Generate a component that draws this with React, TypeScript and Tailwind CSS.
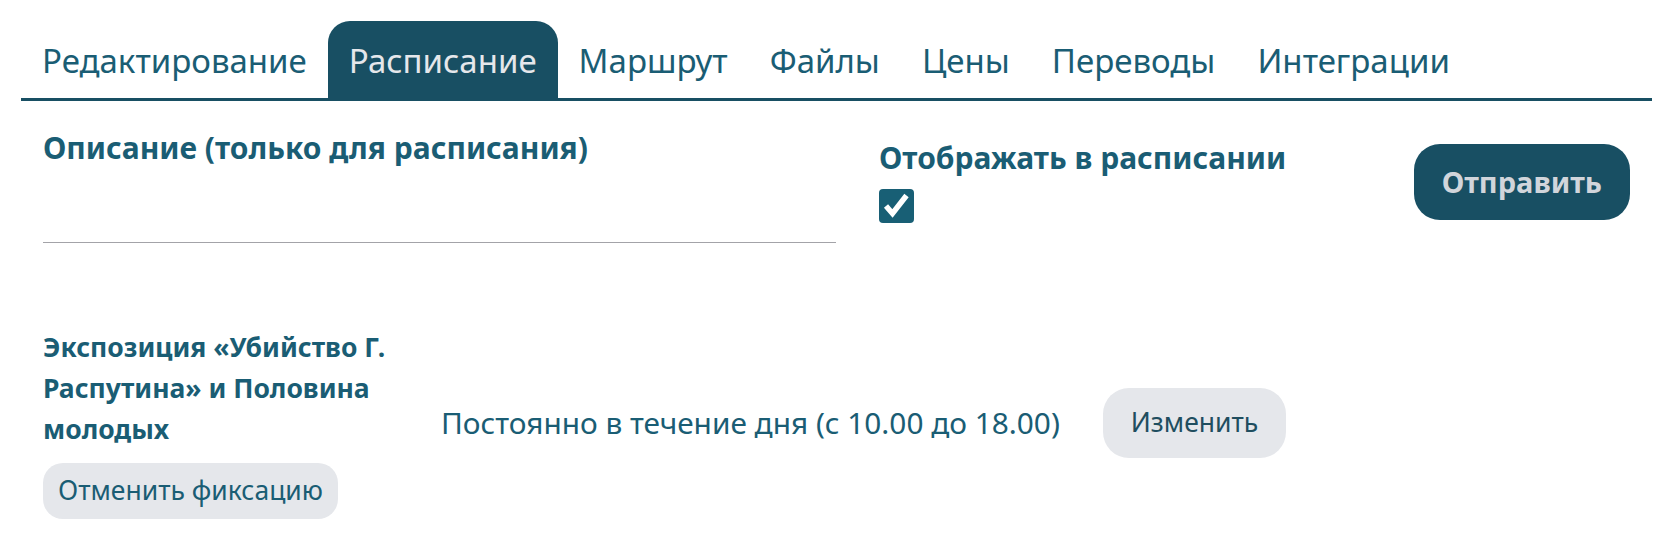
import { useState } from "react";

const tabs = ["Редактирование", "Расписание", "Маршрут", "Файлы", "Цены", "Переводы", "Интеграции"];

export default function App() {
  const [active, setActive] = useState("Расписание");
  const [visible, setVisible] = useState(true);

  return (
    <div className="min-h-screen bg-white px-[21px] pt-[21px] text-[#1a5d74] font-['Segoe_UI','Noto_Sans',sans-serif]">
      {/* Tabs */}
      <div className="flex border-b-[3px] border-[#184f63]">
        {tabs.map((t) => (
          <button
            key={t}
            onClick={() => setActive(t)}
            className={
              t === active
                ? "h-[77px] px-[21px] pt-[2px] rounded-t-[22px] bg-[#184f63] text-[#e5e7eb] text-[33px] leading-none"
                : "h-[77px] px-[21px] pt-[2px] rounded-t-[22px] text-[#1a5d74] text-[33px] leading-none"
            }
          >
            {t}
          </button>
        ))}
      </div>

      <div className="px-[22px]">
        {/* Description + show in schedule + submit */}
        <div className="flex items-start gap-[43px] mt-[27px]">
          <div className="w-[793px]">
            <h3 className="text-[30px] font-bold leading-[39px]">Описание (только для расписания)</h3>
            <input
              type="text"
              className="w-full h-[76px] border-b border-[#a3a3a8] outline-none bg-transparent text-[24px]"
            />
          </div>

          <div className="flex flex-col gap-[12px] mt-[10px]">
            <h3 className="text-[30px] font-bold leading-[39px]">Отображать в расписании</h3>
            <button
              onClick={() => setVisible(!visible)}
              className="w-[35px] h-[34px] rounded-[4px] bg-[#185f75] flex items-center justify-center"
            >
              {visible && (
                <svg width="35" height="34" viewBox="0 0 35 34" fill="none">
                  <path d="M7 17l6.5 7.5L27.5 6.5" stroke="white" strokeWidth="5.5" />
                </svg>
              )}
            </button>
          </div>

          <button className="ml-auto mt-[16px] h-[76px] px-[28px] rounded-[26px] bg-[#184f63] text-[#d1d5db] text-[29px] font-bold">
            Отправить
          </button>
        </div>

        {/* Schedule row */}
        <div className="flex items-center gap-[40px] mt-[84px]">
          <div className="w-[358px] flex flex-col items-start">
            <div className="text-[26.5px] font-bold leading-[41px]">Экспозиция «Убийство Г. Распутина» и Половина молодых</div>
            <button className="mt-[13px] h-[56px] px-[15px] rounded-[20px] bg-[#e5e7eb] text-[26.5px] text-[#1a5d74]">
              Отменить фиксацию
            </button>
          </div>
          <div className="text-[29.8px]">Постоянно в течение дня (с 10.00 до 18.00)</div>
          <button className="ml-[3px] h-[70px] px-[28px] rounded-[26px] bg-[#e5e7eb] text-[26.5px] text-[#1f4e5f]">
            Изменить
          </button>
        </div>
      </div>
    </div>
  );
}
